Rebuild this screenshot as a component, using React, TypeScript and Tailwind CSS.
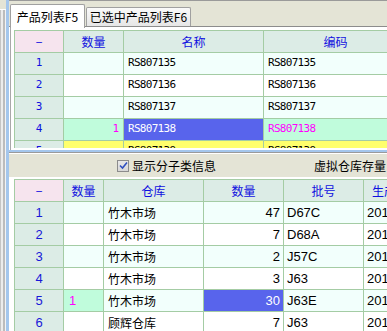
import React from "react";

const CJK = { fontFamily: '"Noto Sans CJK SC", "Liberation Sans", sans-serif' };
const MONO = { fontFamily: '"DejaVu Sans Mono", "Noto Sans CJK SC", monospace' };
const SANS = { fontFamily: '"Liberation Sans", "Noto Sans CJK SC", sans-serif' };

const topRows = [
  { n: "1", qty: "", name: "RS807135", code: "RS807135", bg: "bg-[#f2fffc]" },
  { n: "2", qty: "", name: "RS807136", code: "RS807136", bg: "bg-white" },
  { n: "3", qty: "", name: "RS807137", code: "RS807137", bg: "bg-[#f2fffc]" },
  { n: "4", qty: "1", name: "RS807138", code: "RS807138", bg: "sel" },
  { n: "5", qty: "", name: "RS807139", code: "RS807139", bg: "bg-[#ffff6c]" },
];

const botRows = [
  { n: "1", q: "", wh: "竹木市场", num: "47", batch: "D67C", bg: "bg-[#f2fffc]" },
  { n: "2", q: "", wh: "竹木市场", num: "7", batch: "D68A", bg: "bg-white" },
  { n: "3", q: "", wh: "竹木市场", num: "2", batch: "J57C", bg: "bg-[#f2fffc]" },
  { n: "4", q: "", wh: "竹木市场", num: "3", batch: "J63", bg: "bg-white" },
  { n: "5", q: "1", wh: "竹木市场", num: "30", batch: "J63E", bg: "sel" },
  { n: "6", q: "", wh: "顾辉仓库", num: "7", batch: "J63", bg: "bg-white" },
];

const cell = "h-[22px] border-r border-b border-[#a4cca4] flex items-center shrink-0 overflow-hidden whitespace-nowrap";

export default function App() {
  return (
    <div className="w-[387px] h-[331px] overflow-hidden flex bg-white text-[12px]" style={CJK}>
      {/* left strip */}
      <div className="w-[6px] h-full flex flex-col shrink-0">
        <div className="h-[10px] bg-[#e4e4d6] border-b border-white" />
        <div className="flex-1 flex">
          <div className="w-[1px] bg-[#c4c4c4]" />
          <div className="w-[2px] bg-[#ececec]" />
          <div className="w-[2px] bg-[#bcbcbc]" />
          <div className="w-[1px] bg-[#f4f4f4]" />
        </div>
      </div>
      <div className="w-[3px] h-full bg-[#a4c6ec] shrink-0" />
      {/* main */}
      <div className="flex-1 flex flex-col min-w-0">
        {/* top pane */}
        <div className="h-[150px] flex flex-col shrink-0">
          <div className="h-[27px] bg-[#e4e4d6] border-t border-[#9a9a9a] border-b border-b-[#8c8c8c] flex items-end pl-[1px] relative shrink-0">
            <div className="absolute left-[1px] top-[3px] w-[75px] h-[24px] bg-white border border-[#a0a0a0] border-b-0 rounded-t-[2px] flex items-center justify-center text-black z-10">
              产品列表F5
            </div>
            <div className="ml-[76px] h-[19px] w-[105px] bg-gradient-to-b from-[#fafafa] to-[#e6e6e6] border border-[#a0a0a0] border-b-0 rounded-t-[2px] flex items-center justify-center text-black">
              已选中产品列表F6
            </div>
          </div>
          <div className="flex-1 bg-white border-l border-[#a8a8a8] ml-[1px] pl-[3px] pt-[3px] pb-[2px] overflow-hidden">
            <div className="h-full overflow-hidden border-l border-t border-[#a4cca4]">
              <div className="flex">
                <div className={`${cell} w-[49px] justify-center bg-[#f6e4ee] text-[#1010e0]`}>−</div>
                <div className={`${cell} w-[60px] justify-center bg-[#dcece6] text-[#1010e0]`}>数量</div>
                <div className={`${cell} w-[140px] justify-center bg-[#dcece6] text-[#1010e0]`}>名称</div>
                <div className={`${cell} w-[144px] justify-center bg-[#dcece6] text-[#1010e0]`}>编码</div>
              </div>
              {topRows.map((r) => {
                const sel = r.bg === "sel";
                return (
                  <div className="flex" key={r.n}>
                    <div className={`${cell} w-[49px] justify-center bg-[#dcece6] text-[#1010e0] text-[11px]`} style={MONO}>{r.n}</div>
                    <div className={`${cell} w-[60px] justify-end pr-[4px] text-[11px] ${sel ? "bg-[#c0fcdc] text-[#ff00ff]" : r.bg}`} style={MONO}>{r.qty}</div>
                    <div className={`${cell} w-[140px] pl-[4px] text-[11px] tracking-[-0.7px] ${sel ? "bg-[#5864ec] text-white" : r.bg + " text-black"}`} style={MONO}>{r.name}</div>
                    <div className={`${cell} w-[144px] pl-[4px] text-[11px] tracking-[-0.7px] ${sel ? "bg-[#c0fcdc] text-[#ff00ff]" : r.bg + " text-black"}`} style={MONO}>{r.code}</div>
                  </div>
                );
              })}
            </div>
          </div>
        </div>
        {/* horizontal splitter */}
        <div className="h-[3px] bg-[#a4c6ec] border-b border-[#9a9a9a] shrink-0" />
        {/* bottom pane */}
        <div className="flex-1 flex flex-col min-h-0">
          <div className="h-[24px] bg-[#e4e4d6] border-t border-white flex items-center shrink-0 pl-[108px] whitespace-nowrap">
            <div className="w-[12px] h-[12px] border border-[#8c8c8c] bg-gradient-to-b from-[#e8e8e8] to-[#d8d8d8] flex items-center justify-center">
              <svg width="9" height="9" viewBox="0 0 9 9">
                <path d="M1 4.5 L3.5 7 L8 1.5" stroke="#3050c0" strokeWidth="1.6" fill="none" />
              </svg>
            </div>
            <span className="ml-[3px] text-black text-[12px]">显示分子类信息</span>
            <span className="ml-[98px] text-black text-[12px]">虚拟仓库存量</span>
          </div>
          <div className="flex-1 bg-white pl-[4px] pt-[2px] overflow-hidden border-l border-white">
            <div className="overflow-hidden border-l border-t border-[#a4cca4]" style={SANS}>
              <div className="flex" style={CJK}>
                <div className={`${cell} w-[49px] justify-center bg-[#f6e4ee] text-[#1010e0]`}>−</div>
                <div className={`${cell} w-[40px] justify-center bg-[#dcece6] text-[#1010e0]`}>数量</div>
                <div className={`${cell} w-[100px] justify-center bg-[#dcece6] text-[#1010e0]`}>仓库</div>
                <div className={`${cell} w-[80px] justify-center bg-[#dcece6] text-[#1010e0]`}>数量</div>
                <div className={`${cell} w-[80px] justify-center bg-[#dcece6] text-[#1010e0]`}>批号</div>
                <div className={`${cell} w-[80px] justify-start pl-[8px] bg-[#dcece6] text-[#1010e0]`}>生产日期</div>
              </div>
              {botRows.map((r) => {
                const sel = r.bg === "sel";
                return (
                  <div className="flex" key={r.n}>
                    <div className={`${cell} w-[49px] justify-center bg-[#dcece6] text-[#1818d8] text-[13px]`}>{r.n}</div>
                    <div className={`${cell} w-[40px] pl-[5px] text-[13px] ${sel ? "bg-[#c0fcdc] text-[#ff00ff]" : r.bg}`}>{r.q}</div>
                    <div className={`${cell} w-[100px] pl-[4px] text-black text-[12px] ${sel ? "bg-[#f2fffc]" : r.bg}`} style={CJK}>{r.wh}</div>
                    <div className={`${cell} w-[80px] justify-end pr-[3px] text-[13px] ${sel ? "bg-[#5864ec] text-white" : r.bg + " text-black"}`}>{r.num}</div>
                    <div className={`${cell} w-[80px] pl-[3px] text-black text-[13px] ${sel ? "bg-[#f2fffc]" : r.bg}`}>{r.batch}</div>
                    <div className={`${cell} w-[80px] pl-[3px] text-black text-[13px] ${sel ? "bg-[#f2fffc]" : r.bg}`}>2013-05-12</div>
                  </div>
                );
              })}
            </div>
          </div>
        </div>
      </div>
    </div>
  );
}
